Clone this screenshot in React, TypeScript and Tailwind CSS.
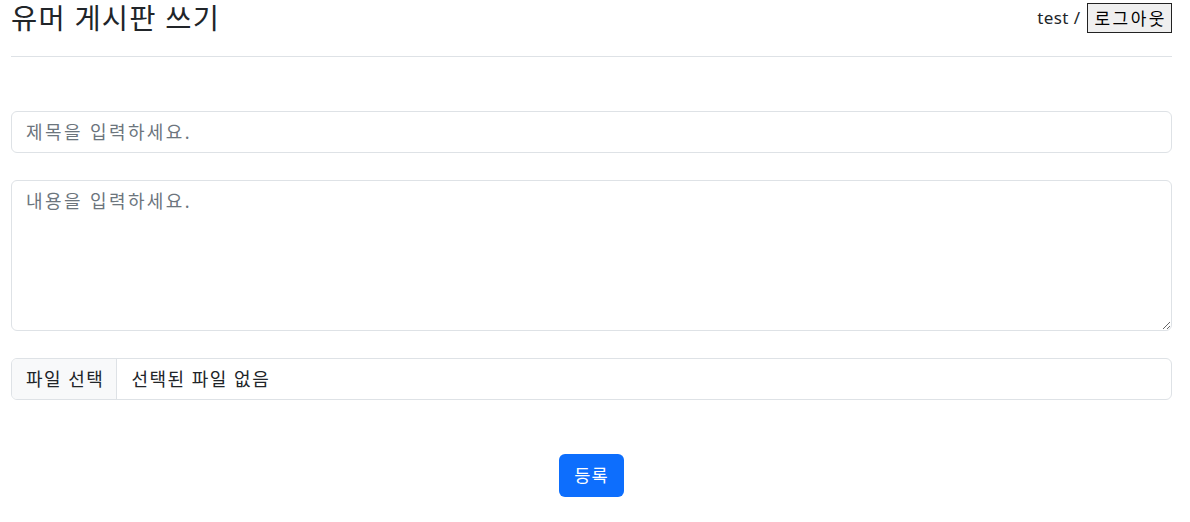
import React from "react";

export default function App() {
  const font = { fontFamily: '"Noto Sans", "Noto Sans CJK KR", sans-serif' };
  return (
    <div className="w-[1190px] h-[522px] bg-white text-[#212529] overflow-hidden" style={font}>
      <div className="pl-[11px] pr-[18px]">
        <div className="flex items-start justify-between h-[57px] border-b border-[#dee2e6]">
          <h3 className="text-[28.5px] leading-[34px] mt-[1px] font-normal tracking-[1.2px]">유머 게시판 쓰기</h3>
          <div className="flex items-center mt-[3px] text-[17px]">
            <span className="mr-[7px] tracking-[0.4px]">test /</span>
            <button className="h-[30px] pl-[6px] pr-[4px] border border-[#222] bg-[#efefef] text-[17px] tracking-[2.5px] leading-none text-black">
              로그아웃
            </button>
          </div>
        </div>
        <div className="pt-[54px] flex flex-col text-[18px] tracking-[1.5px]">
          <input
            className="h-[42px] w-full rounded-[6px] border border-[#dee2e6] px-[14px] placeholder:text-[#6c757d] outline-none tracking-[2.4px]"
            placeholder="제목을 입력하세요."
          />
          <textarea
            className="mt-[27px] h-[151px] w-full rounded-[6px] border border-[#dee2e6] px-[14px] py-[7px] leading-[26px] placeholder:text-[#6c757d] outline-none resize-y tracking-[2.4px]"
            placeholder="내용을 입력하세요."
          />
          <div className="mt-[27px] h-[42px] w-full rounded-[6px] border border-[#dee2e6] flex items-stretch overflow-hidden">
            <div className="bg-[#f8f9fa] border-r border-[#dee2e6] pl-[14px] pr-[12px] flex items-center">파일 선택</div>
            <div className="px-[14px] flex items-center">선택된 파일 없음</div>
          </div>
          <div className="mt-[54px] flex justify-center">
            <button className="h-[43px] w-[65px] rounded-[6px] bg-[#0d6efd] text-white text-[17.6px] tracking-[1px]">등록</button>
          </div>
        </div>
      </div>
    </div>
  );
}
